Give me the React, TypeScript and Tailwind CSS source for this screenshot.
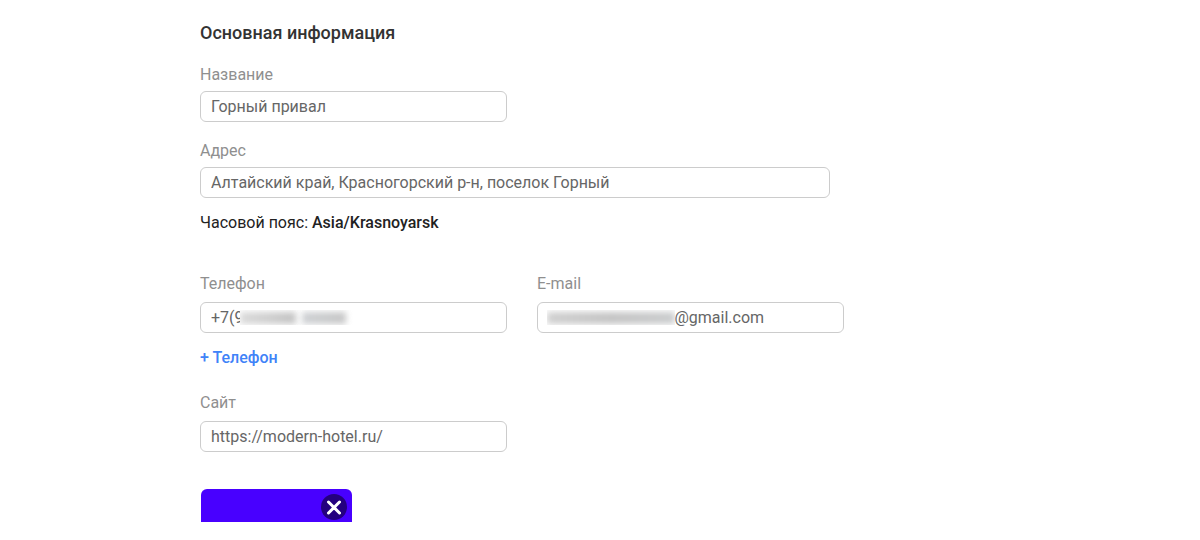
import React, { useState } from 'react';

type FieldProps = {
  id: string;
  label: string;
  value: string;
  type?: string;
  className?: string;
  labelClass?: string;
  inputClass?: string;
  children?: React.ReactNode;
};

const Field: React.FC<FieldProps> = ({
  id,
  label,
  value,
  type = 'text',
  className = '',
  labelClass = 'mb-1',
  inputClass = 'px-2.5',
  children,
}) => {
  const [text, setText] = useState(value);

  return (
    <div className={`w-full ${className}`}>
      <label htmlFor={id} className={`block text-[#8f8f8f] ${labelClass}`}>
        {label}
      </label>
      <div className="relative">
        <input
          id={id}
          type={type}
          value={text}
          onChange={(e) => setText(e.target.value)}
          className={`block h-[31px] w-full rounded-md border border-[#cccccc] bg-white text-[#666666] outline-none focus:border-[#3f83f8] ${inputClass}`}
        />
        {children}
      </div>
    </div>
  );
};

const App: React.FC = () => {
  return (
    <main className="mx-auto w-2/3 pt-[21px] pb-4 font-[Roboto,sans-serif] text-base leading-6">
      <form onSubmit={(e) => e.preventDefault()}>
        <h1 className="text-lg leading-6 font-medium text-[#333333]">Основная информация</h1>

        <Field id="name" label="Название" value="Горный привал" className="mt-[18px] max-w-[307px]" />
        <Field
          id="address"
          label="Адрес"
          value="Алтайский край, Красногорский р-н, поселок Горный"
          className="mt-[17px] max-w-[630px]"
        />
        <p className="mt-[13px] text-[#222222]">
          Часовой пояс: <b className="font-medium">Asia/Krasnoyarsk</b>
        </p>

        <div className="mt-[37px] flex gap-[30px]">
          <Field id="phone" label="Телефон" value="+7(9" type="tel" className="max-w-[307px]" labelClass="mb-1.5">
            {/* hidden digits */}
            <div aria-hidden="true" className="absolute inset-y-2 left-10 flex items-center overflow-hidden bg-white pr-2">
              <span className="h-3 w-14 bg-linear-to-r from-[#dadada] via-[#cfcfcf] to-[#c2c2c2] blur-[3px]" />
              <span className="ml-1.5 h-3 w-11 bg-linear-to-r from-[#ced1d4] to-[#c6c6c6] blur-[3px]" />
            </div>
          </Field>
          <Field
            id="email"
            label="E-mail"
            value="e@gmail.com"
            className="max-w-[307px]"
            labelClass="mb-1.5"
            inputClass="pr-2.5 pl-[128px]"
          >
            {/* hidden mailbox name */}
            <div aria-hidden="true" className="absolute inset-y-2 left-2.5 flex items-center overflow-hidden bg-white">
              <span className="h-3 w-32 bg-linear-to-r from-[#cfcfcf] via-[#c4c4c4] to-[#cacccd] blur-[3px]" />
            </div>
          </Field>
        </div>

        <button type="button" className="mt-[13px] block font-medium text-[#3f83f8]">
          + Телефон
        </button>

        <Field
          id="site"
          label="Сайт"
          value="https://modern-hotel.ru/"
          type="url"
          className="mt-[21px] max-w-[307px]"
          labelClass="mb-1.5"
        />

        <div className="mt-[37px] ml-px flex h-[33px] w-[151px] items-start justify-end rounded-t-md bg-[#4800ff] pt-[5px] pr-[5px]">
          <button
            type="button"
            aria-label="Удалить"
            className="flex size-[26px] items-center justify-center rounded-full bg-[#24007f]"
          >
            <svg viewBox="0 0 26 26" className="size-[26px]" fill="none" stroke="#ffffff" strokeWidth="3" strokeLinecap="round">
              <path d="M7.5 8l11 11M18.5 8l-11 11" />
            </svg>
          </button>
        </div>
      </form>
    </main>
  );
};

export default App;
